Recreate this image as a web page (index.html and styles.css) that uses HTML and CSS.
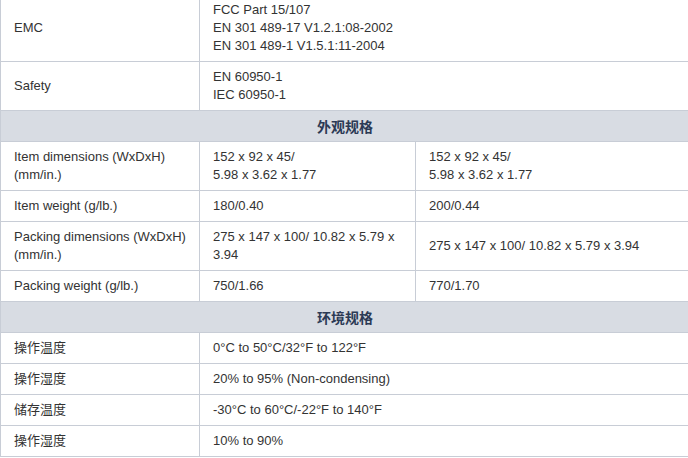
FILE: index.html
```html
<!DOCTYPE html>
<html>
<head>
<meta charset="utf-8">
<link rel="stylesheet" href="styles.css">
</head>
<body>
<table class="spec">
  <colgroup>
    <col class="c1">
    <col class="c2">
    <col class="c3">
  </colgroup>
  <tbody>
    <tr>
      <td>EMC</td>
      <td colspan="2">FCC Part 15/107<br>EN 301 489-17 V1.2.1:08-2002<br>EN 301 489-1 V1.5.1:11-2004</td>
    </tr>
    <tr>
      <td>Safety</td>
      <td colspan="2">EN 60950-1<br>IEC 60950-1</td>
    </tr>
    <tr class="head">
      <th colspan="3">外观规格</th>
    </tr>
    <tr>
      <td>Item dimensions (WxDxH)<br>(mm/in.)</td>
      <td>152 x 92 x 45/<br>5.98 x 3.62 x 1.77</td>
      <td>152 x 92 x 45/<br>5.98 x 3.62 x 1.77</td>
    </tr>
    <tr>
      <td>Item weight (g/lb.)</td>
      <td>180/0.40</td>
      <td>200/0.44</td>
    </tr>
    <tr>
      <td>Packing dimensions (WxDxH)<br>(mm/in.)</td>
      <td>275 x 147 x 100/ 10.82 x 5.79 x 3.94</td>
      <td>275 x 147 x 100/ 10.82 x 5.79 x 3.94</td>
    </tr>
    <tr>
      <td>Packing weight (g/lb.)</td>
      <td>750/1.66</td>
      <td>770/1.70</td>
    </tr>
    <tr class="head">
      <th colspan="3">环境规格</th>
    </tr>
    <tr>
      <td>操作温度</td>
      <td colspan="2">0°C to 50°C/32°F to 122°F</td>
    </tr>
    <tr>
      <td>操作湿度</td>
      <td colspan="2">20% to 95% (Non-condensing)</td>
    </tr>
    <tr>
      <td>储存温度</td>
      <td colspan="2">-30°C to 60°C/-22°F to 140°F</td>
    </tr>
    <tr>
      <td>操作湿度</td>
      <td colspan="2">10% to 90%</td>
    </tr>
  </tbody>
</table>
</body>
</html>
```

FILE: styles.css
```css
html, body {
  margin: 0;
  padding: 0;
  background: #ffffff;
}

.spec {
  width: 688px;
  margin-top: -6px;
  border-collapse: collapse;
  table-layout: fixed;
  font-family: "Liberation Sans", Arial, "Noto Sans CJK SC", sans-serif;
  font-size: 13px;
  line-height: 18px;
  color: #333333;
}

.c1 { width: 199px; }
.c2 { width: 216px; }
.c3 { width: 273px; }

.spec td,
.spec th {
  border: 1px solid #c8cdd6;
  padding: 6px 12px 6px 13px;
  text-align: left;
  vertical-align: middle;
}

.spec td + td {
  padding-left: 13px;
}

.spec .head th {
  background: #d8dce3;
  text-align: center;
  font-weight: bold;
  color: #2c3a55;
  font-family: "Noto Sans CJK SC", sans-serif;
  font-size: 14px;
}
```
